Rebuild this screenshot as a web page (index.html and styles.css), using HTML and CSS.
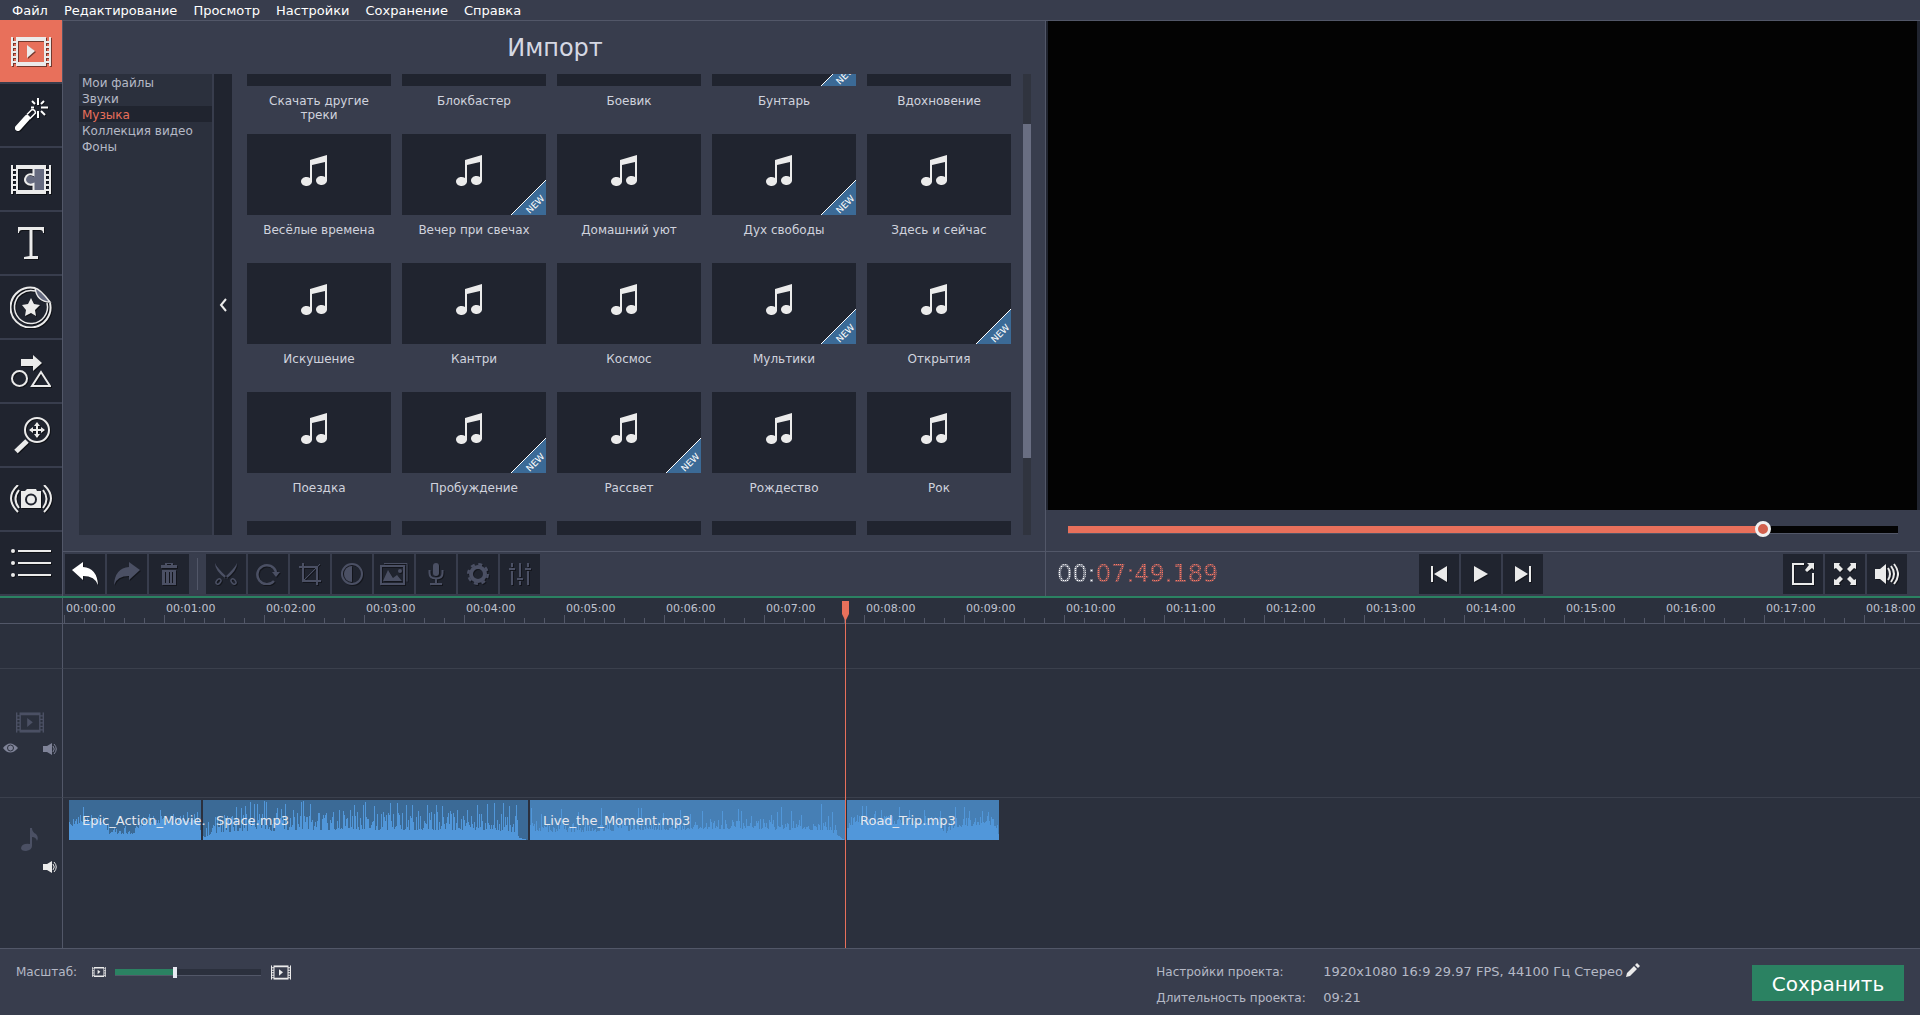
FILE: index.html
```html
<!DOCTYPE html>
<html lang="ru">
<head>
<meta charset="utf-8">
<title>Видеоредактор</title>
<link rel="stylesheet" href="styles.css">
</head>
<body>
<svg class="sprite" aria-hidden="true">
  <defs>
    <symbol id="film" viewBox="0 0 40 29"><path d="M0 0h2v29H0zM38 0h2v29h-2zM5 0h30v29H5zm2 4v21h26V4zM2 4h3v2H2zm0 5h3v2H2zm0 5h3v2H2zm0 5h3v2H2zm0 5h3v2H2zM35 4h3v2h-3zm0 5h3v2h-3zm0 5h3v2h-3zm0 5h3v2h-3zm0 5h3v2h-3z" fill-rule="evenodd"/></symbol>
    <symbol id="film-play" viewBox="0 0 40 29"><use href="#film" width="40" height="29"/><path d="M16 8l8 6-8 7z"/></symbol>
    <symbol id="note" viewBox="0 0 26 32"><path d="M9 5l17-5v26a5.500 4.500 0 1 1-2-4V7L11 10v17a5.500 4.500 0 1 1-2-4z"/></symbol>
    <symbol id="speaker" viewBox="0 0 16 12"><path d="M0 3h4l5-3v12l-5-3H0z"/><path d="M10 3q2.500 3 0 6M11 1q4.500 5 0 10" fill="none" stroke="currentColor"/></symbol>
    <symbol id="ribbon" viewBox="0 0 35 35"><path d="M35 0v35H0z" fill="#3b6a96"/><path d="M0 35L35 0" stroke="#fff" stroke-width="1"/><text x="25" y="27" text-anchor="middle" transform="rotate(-45 25 25)" font-size="9" fill="#fff">NEW</text></symbol>
  </defs>
</svg>

<nav class="menu">
  <a href="#">Файл</a><a href="#">Редактирование</a><a href="#">Просмотр</a><a href="#">Настройки</a><a href="#">Сохранение</a><a href="#">Справка</a>
</nav>

<div class="workspace">
  <aside class="modes">
    <button class="mode active" aria-label="Импорт"><svg width="40" height="29"><use href="#film-play"/></svg></button>
    <button class="mode" aria-label="Фильтры"><svg width="34" height="34" viewBox="0 0 34 34"><path d="M4 30L13 20" stroke="#fff" stroke-width="6" stroke-linecap="round"/><path d="M13 16.500l5-5q3 0 3.500 3.500l-6 6" fill="none" stroke="#fff" stroke-width="1.500"/><path d="M24 0v7M24 13v7M17 9.500h3M27 9.500h7M18 3l3 3M27 6l3-3M27 13l4 4" stroke="#fff" stroke-width="2"/></svg></button>
    <button class="mode" aria-label="Переходы"><svg width="40" height="29" viewBox="0 0 40 29"><path d="M23 3h11v23H23v-8q-4 3-8-1-3-4 2-6 3-1 6 1z" fill="#656a7f"/><use href="#film" width="40" height="29"/><path d="M22.500 3v7q-4-2-7 1-3 4 0 7 3 3 7 1v7" fill="none" stroke="#ebebeb" stroke-width="2"/></svg></button>
    <button class="mode" aria-label="Титры"><svg width="26" height="32" viewBox="0 0 26 32"><path d="M0 0h26v6h-1q0-3-3-3h-7.500v26H20v3H6v-2l5.500-1V3H4Q1 3 1 6H0z"/></svg></button>
    <button class="mode" aria-label="Стикеры"><svg width="42" height="42" viewBox="0 0 42 42"><path d="M25 2A20 20 0 1 0 40 17" fill="none" stroke="#ebebeb" stroke-width="2"/><path d="M25 5A16.500 16.500 0 1 0 37 17" fill="none" stroke="#ebebeb" stroke-width="1.500"/><path d="M25 2q5 1 15 14-13 0-15-14z" fill="#656a7f" stroke="#ebebeb" stroke-width="1.500"/><path d="M21 12l3 6 6 1-5 5 1 6-5-3-6 3 1-6-4-5 6-1z"/></svg></button>
    <button class="mode" aria-label="Анимация"><svg width="40" height="32" viewBox="0 0 40 32"><path d="M10 4h12V0l9 8-9 8v-5H10z"/><circle cx="8.500" cy="23.500" r="7.500" fill="none" stroke="#ebebeb" stroke-width="2"/><path d="M30 17l-9 14h18z" fill="none" stroke="#ebebeb" stroke-width="2"/></svg></button>
    <button class="mode" aria-label="Панорама и зум"><svg width="37" height="37" viewBox="0 0 37 37"><circle cx="24" cy="13" r="12" fill="none" stroke="#ebebeb" stroke-width="2"/><path d="M24 6v14M17 13h14" stroke="#ebebeb" stroke-width="2"/><path d="M24 5l3 4h-6zM24 21l3-4h-6zM16 13l4 3v-6zM32 13l-4 3v-6z"/><path d="M3 34.500L14 24" stroke="#ebebeb" stroke-width="5"/></svg></button>
    <button class="mode" aria-label="Стабилизация"><svg width="42" height="28" viewBox="0 0 42 28"><path d="M11 6h4l2-2h9l1 2h4v17H11z"/><circle cx="21" cy="14.500" r="5" fill="none" stroke="#20242f" stroke-width="2"/><path d="M8 0q-14 13 0 27M9 5q-7 9 0 18M34 0q14 13 0 27M33 5q7 9 0 18" fill="none" stroke="#ebebeb" stroke-width="2"/></svg></button>
    <button class="mode" aria-label="Ещё"><svg width="40" height="28" viewBox="0 0 40 28"><circle cx="2" cy="2" r="2"/><circle cx="2" cy="14" r="2"/><circle cx="2" cy="26" r="2"/><path d="M7 1h33v2H7zm0 12h33v2H7zm0 12h33v2H7z"/></svg></button>
  </aside>

  <main class="stage">
    <section class="library">
      <h1>Импорт</h1>
      <div class="browser">
        <ul class="folders">
          <li>Мои файлы</li><li>Звуки</li><li class="selected">Музыка</li><li>Коллекция видео</li><li>Фоны</li>
        </ul>
        <button class="collapse" aria-label="Свернуть"><svg width="8" height="14" viewBox="0 0 8 14"><path d="M7 1L2 7l5 6" fill="none" stroke="#ebebeb" stroke-width="2"/></svg></button>
        <div class="viewport">
          <div class="tiles">
            <figure><div class="thumb"></div><figcaption>Скачать другие треки</figcaption></figure>
            <figure><div class="thumb"></div><figcaption>Блокбастер</figcaption></figure>
            <figure><div class="thumb"></div><figcaption>Боевик</figcaption></figure>
            <figure><div class="thumb"><svg class="new"><use href="#ribbon"/></svg></div><figcaption>Бунтарь</figcaption></figure>
            <figure><div class="thumb"></div><figcaption>Вдохновение</figcaption></figure>
            <figure><div class="thumb"><svg class="note"><use href="#note"/></svg></div><figcaption>Весёлые времена</figcaption></figure>
            <figure><div class="thumb"><svg class="note"><use href="#note"/></svg><svg class="new"><use href="#ribbon"/></svg></div><figcaption>Вечер при свечах</figcaption></figure>
            <figure><div class="thumb"><svg class="note"><use href="#note"/></svg></div><figcaption>Домашний уют</figcaption></figure>
            <figure><div class="thumb"><svg class="note"><use href="#note"/></svg><svg class="new"><use href="#ribbon"/></svg></div><figcaption>Дух свободы</figcaption></figure>
            <figure><div class="thumb"><svg class="note"><use href="#note"/></svg></div><figcaption>Здесь и сейчас</figcaption></figure>
            <figure><div class="thumb"><svg class="note"><use href="#note"/></svg></div><figcaption>Искушение</figcaption></figure>
            <figure><div class="thumb"><svg class="note"><use href="#note"/></svg></div><figcaption>Кантри</figcaption></figure>
            <figure><div class="thumb"><svg class="note"><use href="#note"/></svg></div><figcaption>Космос</figcaption></figure>
            <figure><div class="thumb"><svg class="note"><use href="#note"/></svg><svg class="new"><use href="#ribbon"/></svg></div><figcaption>Мультики</figcaption></figure>
            <figure><div class="thumb"><svg class="note"><use href="#note"/></svg><svg class="new"><use href="#ribbon"/></svg></div><figcaption>Открытия</figcaption></figure>
            <figure><div class="thumb"><svg class="note"><use href="#note"/></svg></div><figcaption>Поездка</figcaption></figure>
            <figure><div class="thumb"><svg class="note"><use href="#note"/></svg><svg class="new"><use href="#ribbon"/></svg></div><figcaption>Пробуждение</figcaption></figure>
            <figure><div class="thumb"><svg class="note"><use href="#note"/></svg><svg class="new"><use href="#ribbon"/></svg></div><figcaption>Рассвет</figcaption></figure>
            <figure><div class="thumb"><svg class="note"><use href="#note"/></svg></div><figcaption>Рождество</figcaption></figure>
            <figure><div class="thumb"><svg class="note"><use href="#note"/></svg></div><figcaption>Рок</figcaption></figure>
            <figure><div class="thumb"></div></figure>
            <figure><div class="thumb"></div></figure>
            <figure><div class="thumb"></div></figure>
            <figure><div class="thumb"></div></figure>
            <figure><div class="thumb"></div></figure>
          </div>
        </div>
        <div class="scrollbar"><div class="scroll-thumb"></div></div>
      </div>
    </section>

    <section class="player">
      <div class="screen"></div>
      <input class="range seek" type="range" min="0" max="1000" value="844" style="--fill:84%" aria-label="Позиция">
    </section>

    <div class="tools">
      <button class="tool on" aria-label="Отменить"><svg width="26" height="24" viewBox="0 0 26 24"><path d="M0 8l11-8v5q14 1 15 18-3-9-15-9v4z"/></svg></button>
      <button class="tool" aria-label="Повторить"><svg width="26" height="24" viewBox="0 0 26 24"><path d="M26 8L15 0v5Q1 6 0 23q3-9 15-9v4z"/></svg></button>
      <button class="tool" aria-label="Удалить"><svg width="16" height="22" viewBox="0 0 16 22"><path d="M0 2h4V0h8v2h4v3H0zm6 0h4V1H6zM1 7h14v15H1zm3 2v11h1V9zm4 0v11h1V9zm3 0v11h1V9z" fill-rule="evenodd"/></svg></button>
      <span class="divider"></span>
      <button class="tool" aria-label="Разрезать"><svg width="22" height="22" viewBox="0 0 22 22"><path d="M0 0q2 5 13 15l-2 1Q0 8 0 0zM22 0q-2 5-13 15l2 1Q22 8 22 0z"/><g fill="none" stroke="currentColor" stroke-width="1.500"><ellipse cx="3.500" cy="18.500" rx="2" ry="3" transform="rotate(40 3.500 18.500)"/><ellipse cx="18.500" cy="18.500" rx="2" ry="3" transform="rotate(-40 18.500 18.500)"/></g></svg></button>
      <button class="tool" aria-label="Повернуть"><svg width="24" height="22" viewBox="0 0 24 22"><path d="M18 18a9.500 9.500 0 1 1 2-9" fill="none" stroke="currentColor" stroke-width="2.500"/><path d="M16 9h8l-4 5z"/></svg></button>
      <button class="tool" aria-label="Кадрировать"><svg width="22" height="22" viewBox="0 0 22 22"><path d="M0 4h18v18M4 0v18h18" fill="none" stroke="currentColor" stroke-width="2"/><path d="M4 18L21 1" stroke="currentColor"/></svg></button>
      <button class="tool" aria-label="Цветокоррекция"><svg width="22" height="22" viewBox="0 0 22 22"><circle cx="11" cy="11" r="10" fill="none" stroke="currentColor" stroke-width="2"/><path d="M11 3v16a8 8 0 0 1 0-16z"/></svg></button>
      <button class="tool" aria-label="Слайды"><svg width="28" height="22" viewBox="0 0 28 22"><path d="M1 3h23v18H1z" fill="none" stroke="currentColor" stroke-width="2"/><path d="M4 .5h23v18" fill="none" stroke="currentColor"/><path d="M3 18l5-11 5 8 4-3 5 6z"/><circle cx="20" cy="8" r="2"/></svg></button>
      <button class="tool" aria-label="Запись звука"><svg width="16" height="22" viewBox="0 0 16 22"><rect x="5" width="6" height="13" rx="3"/><path d="M1.500 7v3q0 5.500 6.500 5.500t6.500-5.500V7M8 15v6M2 21h12" fill="none" stroke="currentColor" stroke-width="2"/></svg></button>
      <button class="tool" aria-label="Свойства клипа"><svg width="22" height="22" viewBox="0 0 22 22"><circle cx="11" cy="11" r="7" fill="none" stroke="currentColor" stroke-width="4"/><circle cx="11" cy="11" r="9.800" fill="none" stroke="currentColor" stroke-width="2.400" stroke-dasharray="4 3.700"/></svg></button>
      <button class="tool" aria-label="Эквалайзер"><svg width="22" height="22" viewBox="0 0 22 22"><path d="M2 0h2v4H2zM0 5h6v2H0zm2 3h2v14H2zM10 0h2v14h-2zM8 15h6v2H8zm2 3h2v4h-2zM18 0h2v4h-2zM16 5h6v2h-6zm2 3h2v14h-2z"/></svg></button>
    </div>

    <div class="controls">
      <output class="timecode"><span class="tc-idle">00:</span><span class="tc-live">07:49.189</span></output>
      <div class="group transport">
        <button class="tool play" aria-label="Предыдущий кадр"><svg width="16" height="16" viewBox="0 0 16 16"><path d="M0 0h2v16H0zM16 0v16L3 8z"/></svg></button>
        <button class="tool play" aria-label="Воспроизвести"><svg width="14" height="16" viewBox="0 0 14 16"><path d="M0 0l14 8-14 8z"/></svg></button>
        <button class="tool play" aria-label="Следующий кадр"><svg width="16" height="16" viewBox="0 0 16 16"><path d="M14 0h2v16h-2zM0 0v16l13-8z"/></svg></button>
      </div>
      <div class="group">
        <button class="tool play" aria-label="Открепить плеер"><svg width="22" height="22" viewBox="0 0 22 22"><path d="M12 1H1v20h20V10" fill="none" stroke="currentColor" stroke-width="2"/><path d="M15 0h7v7l-2-2-5 4-2-2 4-5z"/></svg></button>
        <button class="tool play" aria-label="Во весь экран"><svg width="22" height="22" viewBox="0 0 22 22"><path id="arr" d="M0 0h6L5 2l4 4-3 3-4-4-2 1z"/><use href="#arr" transform="rotate(90 11 11)"/><use href="#arr" transform="rotate(180 11 11)"/><use href="#arr" transform="rotate(270 11 11)"/></svg></button>
        <button class="tool play" aria-label="Громкость"><svg width="24" height="22" viewBox="0 0 24 22"><path d="M0 6h5l6-5v20l-6-5H0z"/><path d="M13 5q4 6 0 12M16 3q6 8 0 16M19 1q8 10 0 20" fill="none" stroke="currentColor" stroke-width="2"/></svg></button>
      </div>
    </div>
  </main>
</div>

<section class="timeline">
  <div class="corner"></div>
  <div class="ruler">
    <span>00:00:00</span><span>00:01:00</span><span>00:02:00</span><span>00:03:00</span><span>00:04:00</span><span>00:05:00</span><span>00:06:00</span><span>00:07:00</span><span>00:08:00</span><span>00:09:00</span><span>00:10:00</span><span>00:11:00</span><span>00:12:00</span><span>00:13:00</span><span>00:14:00</span><span>00:15:00</span><span>00:16:00</span><span>00:17:00</span><span>00:18:00</span>
  </div>
  <div class="track-head spacer"></div>
  <div class="lane"></div>
  <div class="track-head video-head">
    <svg width="28" height="21"><use href="#film-play"/></svg>
    <div class="toggles">
      <svg width="15" height="10" viewBox="0 0 15 10"><path d="M0 5q7-9 15 0-8 9-15 0z"/><circle cx="7.500" cy="5" r="3" fill="none" stroke="#2b303d"/></svg>
      <svg width="16" height="12"><use href="#speaker"/></svg>
    </div>
  </div>
  <div class="lane"></div>
  <div class="track-head audio-head">
    <svg width="17" height="23" viewBox="0 0 17 23"><path d="M9 0h2q0 4 4 6 3 3 1 7-1-4-5-4v9q0 4-6 5-5 0-5-3 1-5 9-4z"/></svg>
    <div class="toggles lit"><svg width="16" height="12"><use href="#speaker"/></svg></div>
  </div>
  <div class="lane clips">
    <div class="clip" style="width:132px"><svg></svg><span>Epic_Action_Movie.</span></div>
    <div class="clip" style="width:325px"><svg></svg><span>Space.mp3</span></div>
    <div class="clip bright" style="width:315px"><svg></svg><span>Live_the_Moment.mp3</span></div>
    <div class="clip bright" style="width:152px"><svg></svg><span>Road_Trip.mp3</span></div>
  </div>
  <div class="playhead" style="left:845px"></div>
</section>

<footer class="status">
  <div class="zoom">
    <label for="zoom">Масштаб:</label>
    <svg width="14" height="10"><use href="#film-play"/></svg>
    <input id="zoom" class="range scale" type="range" min="0" max="100" value="41" style="--fill:40%">
    <svg width="20" height="15"><use href="#film-play"/></svg>
  </div>
  <dl class="info">
    <dt>Настройки проекта:</dt>
    <dd>1920x1080 16:9 29.97 FPS, 44100 Гц Стерео <svg width="14" height="14" viewBox="0 0 14 14"><path d="M0 14l1-4 7-7 3 3-7 7zM9 2l2-2 3 3-2 2z"/></svg></dd>
    <dt>Длительность проекта:</dt>
    <dd>09:21</dd>
  </dl>
  <button class="save">Сохранить</button>
</footer>
<script src="waves.js"></script>
</body>
</html>
```
FILE: styles.css
```css
:root {
  --panel: #383d4d;
  --dark: #20242f;
  --deep: #2b303d;
  --line: #525768;
  --accent: #e8705b;
  --green: #2b8262;
  --icon: #ebebeb;
}

* { box-sizing: border-box; }

body {
  margin: 0;
  min-height: 100vh;
  display: flex;
  flex-direction: column;
  background: var(--panel);
  color: #b5b9c6;
  font: 13px/16px "DejaVu Sans", sans-serif;
  overflow: hidden;
}

button {
  display: flex;
  align-items: center;
  justify-content: center;
  border: 0;
  padding: 0;
  background: var(--dark);
  font: inherit;
}

svg { display: block; fill: currentColor; }
.sprite { position: absolute; width: 0; height: 0; }

.menu { display: flex; gap: 16px; height: 20px; padding: 3px 12px 0; line-height: 16px; }
.menu a { color: #fff; text-decoration: none; }

/* upper half */
.workspace { display: flex; height: 578px; border-bottom: 2px solid var(--green); }

.modes {
  width: 63px;
  display: flex;
  flex-direction: column;
  gap: 2px;
  border-right: 1px solid var(--line);
}
.mode { height: 62px; color: var(--icon); }
.mode svg { filter: drop-shadow(1px 1px 0 rgba(0, 0, 0, .5)); }
.mode.active { background: var(--accent); }

.stage {
  flex: 1;
  display: grid;
  grid-template-columns: 983px minmax(0, 1fr);
  grid-template-rows: minmax(0, 1fr) 45px;
  border-top: 1px solid var(--line);
}

.library {
  display: flex;
  flex-direction: column;
  padding: 0 14px 16px 16px;
  border-right: 1px solid var(--line);
}
h1 {
  height: 53px;
  margin: 0;
  color: #d5d8e3;
  font-size: 24px;
  line-height: 55px;
  font-weight: 400;
  text-align: center;
}
.browser { flex: 1; display: flex; min-height: 0; }
.folders { width: 133px; margin: 0 2px 0 0; padding: 0; list-style: none; background: var(--deep); font-size: 12px; white-space: nowrap; }
.folders li { height: 16px; padding-left: 3px; line-height: 18px; }
.folders .selected { background: var(--dark); color: var(--accent); }
.collapse { width: 18px; }
.viewport { flex: 1; padding-left: 15px; overflow: hidden; }
.tiles {
  display: grid;
  grid-template-columns: repeat(5, 144px);
  grid-auto-rows: 129px;
  column-gap: 11px;
  margin-top: -69px;
}
figure { margin: 0; }
.thumb { position: relative; height: 81px; padding: 21px 54px; background: var(--dark); color: var(--icon); }
.note { width: 26px; height: 32px; }
.new { position: absolute; right: 0; bottom: 0; width: 35px; height: 35px; }
figcaption { padding: 8px 16px; color: #d0d3dd; font-size: 12px; line-height: 14px; text-align: center; }
.scrollbar { width: 8px; padding-top: 50px; background: #30343f; }
.scroll-thumb { height: 334px; background: #696e82; }

.player { display: flex; flex-direction: column; }
.screen { flex: 1; background: #030303; border: solid var(--dark); border-width: 0 3px 0 2px; }

/* sliders */
.range { appearance: none; margin: 0; background: none; display: block; }
.range::-webkit-slider-runnable-track {
  background: linear-gradient(to right, var(--run) var(--fill), var(--rest) var(--fill));
  box-shadow: 0 1px 0 var(--line);
}
.range::-webkit-slider-thumb { appearance: none; }
.seek { --run: var(--accent); --rest: #030303; height: 41px; margin: 0 22px; padding-bottom: 3px; }
.seek::-webkit-slider-runnable-track { height: 7px; }
.seek::-webkit-slider-thumb {
  width: 16px;
  height: 16px;
  margin-top: -5px;
  border: 3px solid #f0f0f0;
  border-radius: 50%;
  background: #d2604d;
}
.scale { --run: var(--green); --rest: var(--deep); width: 146px; height: 11px; }
.scale::-webkit-slider-runnable-track { height: 6px; }
.scale::-webkit-slider-thumb { width: 4px; height: 11px; margin-top: -2px; background: #e8e9f2; }

/* toolbars */
.tools, .controls { display: flex; border-top: 1px solid var(--line); padding-top: 2px; }
.tools { gap: 2px; padding-left: 2px; border-right: 1px solid var(--line); }
.tool { width: 40px; height: 40px; color: #4b5064; }
.tool svg { filter: drop-shadow(1px 1px 0 rgba(0, 0, 0, .4)); }
.tool.on { color: #fff; }
.tool.play { color: var(--icon); }
.divider { width: 1px; height: 32px; margin: 4px 6px; background: var(--line); }
.controls { justify-content: space-between; padding-right: 13px; padding-left: 11px; }
.group { display: flex; gap: 2px; }
.timecode { width: 122px; white-space: nowrap; font-size: 24px; line-height: 40px; }
/* LED-like readout: the glyphs are filled with a dot grid */
.timecode span {
  color: transparent;
  background:
    linear-gradient(to right, transparent 1px, var(--gap) 1px) 0 0 / 2px 2px,
    linear-gradient(to bottom, var(--ink) 1px, var(--gap) 1px) 0 0 / 2px 2px;
  background-clip: text;
  -webkit-background-clip: text;
}
.tc-idle { --ink: #fff; --gap: #7d818e; }
.tc-live { --ink: #ff7a63; --gap: #7c5158; }

/* timeline */
.timeline {
  position: relative;
  flex: 1;
  display: grid;
  grid-template-columns: 63px minmax(0, 1fr);
  grid-template-rows: 26px 45px 129px minmax(0, 1fr);
  background: var(--deep);
}
.corner, .track-head { border-right: 1px solid var(--line); }
.corner, .ruler { border-bottom: 1px solid var(--line); }
.ruler {
  display: flex;
  padding: 5px 0 0 1px;
  overflow: hidden;
  background:
    linear-gradient(to right, var(--line) 1px, transparent 1px) 1px 100% / 100px 8px repeat-x,
    linear-gradient(to right, var(--line) 1px, transparent 1px) 1px 100% / 20px 5px repeat-x;
  color: #c0c4d0;
  font-size: 11px;
  line-height: 12px;
}
.ruler span { flex: 0 0 100px; padding-left: 2px; }
.spacer, .spacer + .lane, .video-head, .video-head + .lane { border-bottom: 1px solid #3b404d; }
.track-head { color: #4b5064; }
.video-head { padding: 43px 3px 0 16px; }
.audio-head { padding: 30px 3px 0 21px; }
.toggles { display: flex; justify-content: space-between; margin: 10px 0 0 -13px; color: #7f8398; }
.toggles.lit { justify-content: flex-end; color: var(--icon); }
.clips { display: flex; gap: 2px; padding: 2px 6px; }
.clip { position: relative; height: 40px; background: #3b6a96; color: #e6e8ee; white-space: nowrap; }
.clip.bright { background: #467fb5; }
.clip svg { position: absolute; left: 0; top: 0; width: 100%; height: 40px; fill: #5197da; }
.clip span { position: relative; z-index: 1; display: block; padding-left: 13px; line-height: 42px; }
.playhead { position: absolute; top: 21px; bottom: 0; width: 1px; background: var(--accent); }
.playhead::before {
  content: "";
  position: absolute;
  top: -18px;
  left: -3px;
  width: 7px;
  height: 20px;
  background: var(--accent);
  clip-path: polygon(0 0, 100% 0, 100% 65%, 50% 100%, 0 65%);
}

/* footer */
.status { display: flex; height: 67px; padding: 15px 16px 0; border-top: 1px solid var(--line); }
.zoom { display: flex; height: 16px; align-items: center; }
.zoom label { width: 76px; font-size: 12px; }
.zoom svg { color: var(--icon); }
.zoom .range { margin: 0 10px 0 9px; }
.info {
  display: grid;
  grid-template-columns: 167px auto;
  grid-auto-rows: 26px;
  margin: 0 112px 0 auto;
}
.info dt { font-size: 12px; }
.info dd { display: flex; gap: 3px; margin: 0; }
.info svg { margin-top: -1px; color: var(--icon); }
.save { width: 152px; height: 36px; margin-top: 1px; padding-top: 2px; background: var(--green); color: #fff; font-size: 20px; }
```
FILE: waves.js
```js
// Envelope points are [x, level]; peaks are [x, level]. Levels are in pixels of a 40px lane.
const waves = [
  { env: [[0, 15], [14, 20], [34, 17], [40, 8], [66, 8], [74, 17], [130, 20], [132, 2]], noise: 8,
    peaks: [[14, 33], [91, 30], [80, 26], [104, 26], [118, 28], [128, 28]] },
  { env: [[0, 6], [8, 10], [30, 12], [160, 14], [300, 13], [312, 10], [316, 2], [325, 0]], noise: 18,
    peaks: [[33, 33], [38, 32], [42, 34], [47, 38], [51, 36], [54, 36], [61, 39], [63, 38], [74, 32], [78, 31], [82, 36], [90, 30], [98, 38], [100, 39], [107, 36], [116, 27], [122, 25], [130, 28], [136, 30], [140, 29], [147, 30], [151, 35], [160, 35], [162, 38], [171, 34], [180, 28], [187, 37], [194, 37], [203, 35], [209, 35], [215, 29], [224, 35], [233, 35], [239, 34], [247, 29], [254, 30], [264, 30], [274, 35], [284, 36], [291, 37], [300, 37], [306, 34], [313, 35]] },
  { env: [[0, 11], [40, 10], [120, 12], [200, 13], [300, 12], [306, 6], [312, 1], [315, 0]], noise: 11,
    peaks: [[1, 32], [11, 26], [31, 31], [48, 28], [71, 32], [86, 27], [108, 32], [111, 32], [133, 27], [150, 30], [160, 26], [172, 29], [192, 29], [208, 31], [211, 29], [221, 24], [241, 25], [247, 28], [251, 33], [261, 29], [271, 25], [291, 36], [298, 24], [302, 28]] },
  { env: [[0, 13], [8, 19], [20, 18], [60, 18], [92, 17], [98, 8], [106, 14], [140, 18], [148, 14], [152, 6]], noise: 10,
    peaks: [[15, 34], [19, 34], [28, 29], [34, 30], [52, 33], [62, 30], [77, 30], [93, 29], [108, 33], [117, 33], [122, 29], [135, 29], [141, 28]] }
];

function level(env, x) {
  for (let i = 1; i < env.length; i++) {
    const [x0, y0] = env[i - 1], [x1, y1] = env[i];
    if (x <= x1) return y0 + (y1 - y0) * (x - x0) / (x1 - x0);
  }
  return 0;
}

document.querySelectorAll(".clip svg").forEach((svg, n) => {
  const { env, noise, peaks } = waves[n];
  const end = env[env.length - 1][0];
  let seed = 17 + n, d = "";
  for (let x = 0; x < end; x++) {
    seed = (seed * 1103515245 + 12345) % 2147483648;
    const r = seed / 2147483648;
    const base = level(env, x);
    const peak = peaks.find(p => p[0] === x);
    const h = peak ? peak[1] : Math.round(base < 6 ? base : base + (r * r - 0.200) * noise);
    d += `M${x} 40v-${h}h1v${h}z`;
  }
  const path = document.createElementNS("http://www.w3.org/2000/svg", "path");
  path.setAttribute("d", d);
  path.setAttribute("shape-rendering", "crispEdges");
  svg.append(path);
});
```
